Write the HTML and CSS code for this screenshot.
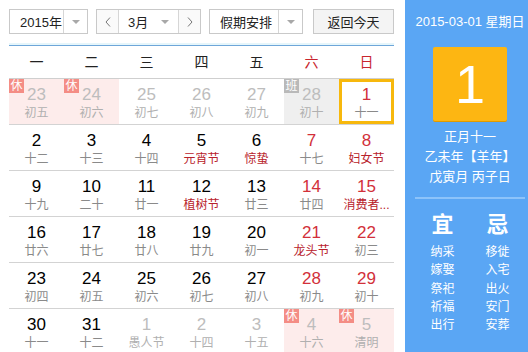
FILE: index.html
```html
<!DOCTYPE html>
<html lang="zh-CN">
<head>
<meta charset="utf-8">
<title>万年历</title>
<link rel="stylesheet" href="styles.css">
</head>
<body>
<div class="app">
  <div class="main">
    <div class="toolbar">
      <div class="sel sel-year">
        <span class="sel-text">2015年</span>
        <span class="sel-arrow"><i class="tri"></i></span>
      </div>
      <div class="month-group">
        <span class="nav-btn"><svg width="6" height="10" viewBox="0 0 6 10"><path d="M5 0.5 L1 5 L5 9.5" fill="none" stroke="#777" stroke-width="1"/></svg></span>
        <span class="month-sel"><span class="sel-text">3月</span><i class="tri"></i></span>
        <span class="nav-btn"><svg width="6" height="10" viewBox="0 0 6 10"><path d="M1 0.5 L5 5 L1 9.5" fill="none" stroke="#777" stroke-width="1"/></svg></span>
      </div>
      <div class="sel sel-hol">
        <span class="sel-text">假期安排</span>
        <span class="sel-arrow"><i class="tri"></i></span>
      </div>
      <button class="today-btn">返回今天</button>
    </div>
    <div class="weekdays">
      <span>一</span><span>二</span><span>三</span><span>四</span><span>五</span><span class="red">六</span><span class="red">日</span>
    </div>
    <div class="grid">
      <div class="cell other hol"><span class="badge">休</span><b>23</b><em>初五</em></div>
      <div class="cell other hol"><span class="badge">休</span><b>24</b><em>初六</em></div>
      <div class="cell other"><b>25</b><em>初七</em></div>
      <div class="cell other"><b>26</b><em>初八</em></div>
      <div class="cell other"><b>27</b><em>初九</em></div>
      <div class="cell other work"><span class="badge">班</span><b>28</b><em>初十</em></div>
      <div class="cell wk today"><b>1</b><em>十一</em></div>

      <div class="cell"><b>2</b><em>十二</em></div>
      <div class="cell"><b>3</b><em>十三</em></div>
      <div class="cell"><b>4</b><em>十四</em></div>
      <div class="cell fest"><b>5</b><em>元宵节</em></div>
      <div class="cell fest"><b>6</b><em>惊蛰</em></div>
      <div class="cell wk"><b>7</b><em>十七</em></div>
      <div class="cell wk fest"><b>8</b><em>妇女节</em></div>

      <div class="cell"><b>9</b><em>十九</em></div>
      <div class="cell"><b>10</b><em>二十</em></div>
      <div class="cell"><b>11</b><em>廿一</em></div>
      <div class="cell fest"><b>12</b><em>植树节</em></div>
      <div class="cell"><b>13</b><em>廿三</em></div>
      <div class="cell wk"><b>14</b><em>廿四</em></div>
      <div class="cell wk fest"><b>15</b><em title="消费者权益日">消费者...</em></div>

      <div class="cell"><b>16</b><em>廿六</em></div>
      <div class="cell"><b>17</b><em>廿七</em></div>
      <div class="cell"><b>18</b><em>廿八</em></div>
      <div class="cell"><b>19</b><em>廿九</em></div>
      <div class="cell"><b>20</b><em>初一</em></div>
      <div class="cell wk fest"><b>21</b><em>龙头节</em></div>
      <div class="cell wk"><b>22</b><em>初三</em></div>

      <div class="cell"><b>23</b><em>初四</em></div>
      <div class="cell"><b>24</b><em>初五</em></div>
      <div class="cell"><b>25</b><em>初六</em></div>
      <div class="cell"><b>26</b><em>初七</em></div>
      <div class="cell"><b>27</b><em>初八</em></div>
      <div class="cell wk"><b>28</b><em>初九</em></div>
      <div class="cell wk"><b>29</b><em>初十</em></div>

      <div class="cell"><b>30</b><em>十一</em></div>
      <div class="cell"><b>31</b><em>十二</em></div>
      <div class="cell other"><b>1</b><em>愚人节</em></div>
      <div class="cell other"><b>2</b><em>十四</em></div>
      <div class="cell other"><b>3</b><em>十五</em></div>
      <div class="cell other hol"><span class="badge">休</span><b>4</b><em>十六</em></div>
      <div class="cell other hol"><span class="badge">休</span><b>5</b><em>清明</em></div>
    </div>
  </div>
  <aside class="side">
    <div class="side-date">2015-03-01 星期日</div>
    <div class="big-day">1</div>
    <div class="lunar">
      <div>正月十一</div>
      <div>乙未年【羊年】</div>
      <div>戊寅月 丙子日</div>
    </div>
    <div class="side-rule"></div>
    <div class="yiji">
      <div class="yj-col">
        <div class="yj-head">宜</div>
        <div>纳采</div><div>嫁娶</div><div>祭祀</div><div>祈福</div><div>出行</div>
      </div>
      <div class="yj-col">
        <div class="yj-head">忌</div>
        <div>移徙</div><div>入宅</div><div>出火</div><div>安门</div><div>安葬</div>
      </div>
    </div>
  </aside>
</div>
</body>
</html>
```
FILE: styles.css
```css
* { box-sizing: border-box; }
html, body { margin: 0; padding: 0; }
body {
  width: 528px;
  height: 352px;
  overflow: hidden;
  background: #fff;
  font-family: "Liberation Sans", "Noto Sans CJK SC", sans-serif;
  color: #000;
}
.app {
  display: flex;
  height: 352px;
}
.main {
  width: 405px;
  padding: 0 11px 0 9px;
}
.toolbar {
  display: flex;
  align-items: flex-start;
  height: 45px;
  padding-top: 9px;
  border-bottom: 2px solid #e6f6fb;
  font-size: 13px;
  color: #222;
}
.sel {
  display: flex;
  height: 25px;
  border: 1px solid #c9c9c9;
  background: #fff;
}
.sel-text {
  display: flex;
  align-items: center;
  padding-left: 10px;
  flex: 1;
}
.sel-arrow {
  display: flex;
  align-items: center;
  justify-content: center;
  width: 24px;
  border-left: 1px solid #d6d6d6;
}
.tri {
  display: block;
  width: 0;
  height: 0;
  border-left: 4px solid transparent;
  border-right: 4px solid transparent;
  border-top: 4px solid #a8a8a8;
}
.sel-year { width: 79px; }
.sel-hol { width: 94px; margin-left: 8px; }
.month-group {
  display: flex;
  height: 25px;
  margin-left: 8px;
  border: 1px solid #c9c9c9;
  background: #fff;
}
.nav-btn {
  width: 21px;
  display: flex;
  align-items: center;
  justify-content: center;
  background: #fafafa;
}
.month-sel {
  width: 61px;
  display: flex;
  align-items: center;
  padding-right: 9px;
  border-left: 1px solid #d6d6d6;
  border-right: 1px solid #d6d6d6;
}
.month-sel .sel-text { padding-left: 9px; }
.today-btn {
  margin-left: 10px;
  width: 81px;
  height: 25px;
  border: 1px solid #c9c9c9;
  background: #f4f4f4;
  font: inherit;
  color: #222;
  padding: 0;
}
.weekdays {
  display: grid;
  grid-template-columns: repeat(7, 55px);
  height: 34px;
  border-top: 1px solid #6ea6d9;
  border-bottom: 1px solid #cfcfcf;
  font-size: 14px;
  line-height: 32px;
  text-align: center;
  color: #222;
}
.weekdays .red { color: #c8262e; }
.grid {
  display: grid;
  grid-template-columns: repeat(7, 55px);
  grid-auto-rows: 46px;
}
.cell {
  position: relative;
  display: flex;
  flex-direction: column;
  align-items: center;
  padding-top: 7px;
  border-bottom: 1px solid #d3d3d3;
}
.cell b {
  font-weight: normal;
  font-size: 17px;
  line-height: 18px;
  color: #000;
}
.cell em {
  font-style: normal;
  font-size: 12px;
  line-height: 16px;
  margin-top: 1px;
  color: #8a8a8a;
  white-space: nowrap;
}
.cell.wk b { color: #d2303a; }
.cell.fest em { color: #b8222b; }
.cell.other b { color: #bdbdbd; }
.cell.other em { color: #b0b0b0; }
.cell.hol { background: #fdeceb; }
.cell.work { background: #efefef; }
.badge {
  position: absolute;
  top: 0;
  left: 0;
  width: 15px;
  height: 14px;
  font-size: 12px;
  line-height: 14px;
  text-align: center;
  color: #fff;
  background: #f48d85;
}
.cell.work .badge { background: #b9b9b9; }
.cell.today { box-shadow: inset 0 0 0 3px #f7b80d; }
.side {
  width: 123px;
  background: #5aa6f4;
  color: #fff;
  padding-left: 7px;
  display: flex;
  flex-direction: column;
  align-items: center;
}
.side-date {
  margin-top: 12px;
  font-size: 13px;
  line-height: 20px;
  white-space: nowrap;
}
.big-day {
  margin-top: 15px;
  width: 74px;
  height: 74px;
  background: #fdb612;
  border-radius: 2px;
  box-shadow: 0 1px 0 #e09a00;
  font-size: 54px;
  line-height: 74px;
  text-align: center;
}
.lunar {
  margin-top: 6px;
  font-size: 13px;
  line-height: 20px;
  text-align: center;
}
.side-rule {
  margin-top: 10px;
  width: 110px;
  height: 2px;
  background: #8cc3fa;
}
.yiji {
  display: grid;
  grid-template-columns: 40px 40px;
  column-gap: 15px;
  margin-top: 13px;
  font-size: 12px;
  line-height: 18.3px;
  text-align: center;
}
.yj-head {
  font-size: 22px;
  line-height: 26px;
  font-weight: 600;
  margin-bottom: 5px;
}
```
